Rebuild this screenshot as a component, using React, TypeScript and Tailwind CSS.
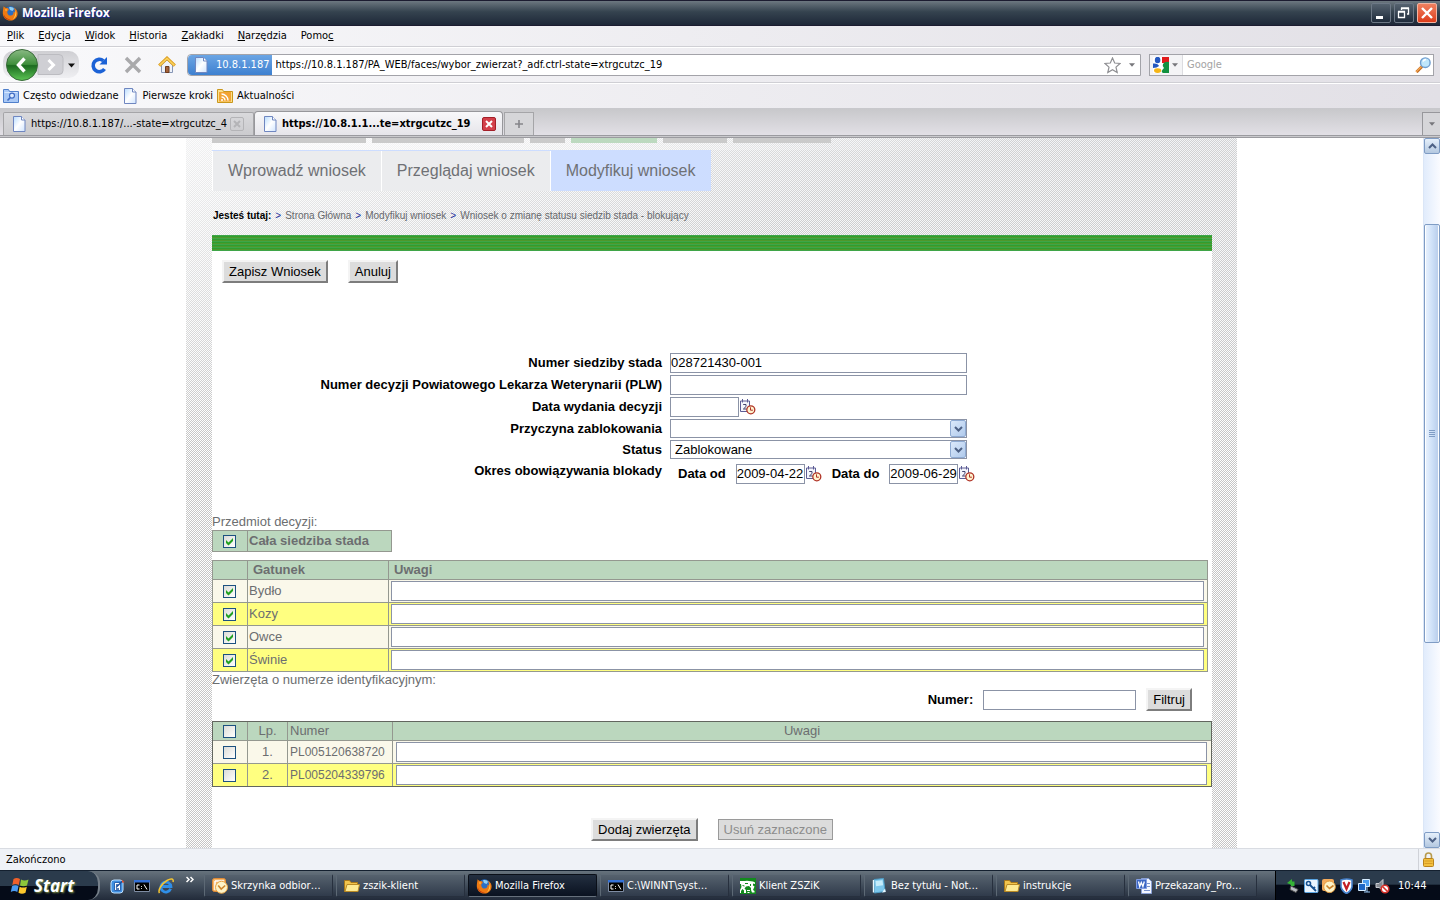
import { useState } from "react";
import type { ReactNode } from "react";
import clsx from "clsx";

/* ---------- Icons ---------- */

function FirefoxIcon() {
  return (
    <svg className="w-4 h-4 shrink-0" viewBox="0 0 16 16" aria-hidden="true">
      <circle cx="8.5" cy="7.5" r="6.2" fill="#2a6fc4" />
      <path d="M7 2.5C9 1.5 11.5 2.5 12 4L10.5 6 8 5z" fill="#8fd0f5" />
      <path
        d="M1.6 1.2C2.4 2.6 3.4 2.8 5 3 6.4 3.2 7 4 6.6 5L5.4 6.2C5 8 6 10.6 8.6 10.6 11 10.6 12 8.6 11.4 6.6L13 7.4C13 5 12.6 3.6 11.6 2.4 14.4 3.8 15.8 6.2 15.6 9 15.2 13 12 15.6 8.4 15.6 4 15.6.8 12.4.8 8 .8 5.4 1.4 3.2 1.6 1.2z"
        fill="#ee7a12"
      />
      <path d="M13.6 5.4C15 8.4 14 12.4 11 14 13 11.4 13.8 8.8 13.6 5.4z" fill="#ffd75a" />
      <path d="M1.8 9C2.6 12.4 5.4 14.4 8.8 14.4 6 15.6 1.6 13.6 1.8 9z" fill="#c2340c" />
      <path d="M3 4.2L5.2 4.4 4 6.4z" fill="#ffc04a" />
    </svg>
  );
}

function PageIcon() {
  return (
    <svg className="w-4 h-4 shrink-0" viewBox="0 0 16 16" aria-hidden="true">
      <defs>
        <linearGradient id="page" x1="0" y1="0" x2="1" y2="1">
          <stop offset="0" stopColor="#b8dcff" />
          <stop offset="0.5" stopColor="#fff" />
          <stop offset="1" stopColor="#cfe4ff" />
        </linearGradient>
      </defs>
      <path d="M1.5.5h8l3.500 3.500v11.500h-11.500z" fill="url(#page)" stroke="#6f86c0" />
      <path d="M9.500.5V4h3.500" fill="#fff" stroke="#6f86c0" />
    </svg>
  );
}

function FolderSearchIcon() {
  return (
    <svg className="w-4 h-4 shrink-0" viewBox="0 0 16 16" aria-hidden="true">
      <path d="M.5 1.500h5l1 2h9v11H.5z" fill="#a9c8f5" stroke="#4f7fcb" />
      <path d="M1.5 4.500h13" stroke="#d6e7ff" />
      <circle cx="9" cy="7.6" r="2.5" fill="#dcebff" stroke="#3f6cc4" strokeWidth="1.2" />
      <path d="M7.2 9.6L4.5 12.500" stroke="#3f6cc4" strokeWidth="1.6" />
    </svg>
  );
}

function FeedIcon() {
  return (
    <svg className="w-4 h-4 shrink-0" viewBox="0 0 16 16" aria-hidden="true">
      <path d="M.5 1.500h5l1 2h9v11H.5z" fill="#fbe08a" stroke="#c9971d" />
      <rect x="2" y="4" width="12" height="9.500" fill="#f3a433" />
      <path d="M4.500 6a6.500 6.500 0 0 1 6.500 6.500M4.500 9A3.500 3.500 0 0 1 8 12.500" fill="none" stroke="#fff" strokeWidth="1.4" />
      <circle cx="5" cy="12" r="1" fill="#fff" />
    </svg>
  );
}

function CalendarIcon() {
  return (
    <svg className="w-4 h-4 shrink-0" viewBox="0 0 16 16" aria-hidden="true">
      <path d="M.5 2h9v10.500h-9z" fill="#f4f5fb" stroke="#5c5c95" />
      <path d="M2.5 0v3.500M7.500 0v3.500" stroke="#5c5c95" />
      <path d="M3.200 5.500h2.800v2l-2.600 2.500h3.200" fill="none" stroke="#42426e" />
      <circle cx="10.800" cy="10.800" r="4" fill="#fff3cf" stroke="#b03326" strokeWidth="1.3" />
      <path d="M10.500 8.300v2.900h2.400" fill="none" stroke="#b03326" />
    </svg>
  );
}

function Caret({ className }: { className?: string }) {
  return (
    <svg className={clsx("w-1.5 h-1 shrink-0", className)} viewBox="0 0 7 4" aria-hidden="true">
      <path d="M0 0h7L3.5 4z" fill="currentColor" />
    </svg>
  );
}

function Chevron({ up }: { up?: boolean }) {
  return (
    <svg className="w-[9px] h-[6px]" viewBox="0 0 9 6" aria-hidden="true">
      <path d={up ? "M1 5l3.5-3.5L8 5" : "M1 1l3.5 3.5L8 1"} fill="none" stroke="#4d6185" strokeWidth="2" />
    </svg>
  );
}

function BackForward() {
  return (
    <svg className="w-[78px] h-[34px]" viewBox="0 0 78 34" aria-hidden="true">
      <defs>
        <linearGradient id="back" x1="0" y1="0" x2="0" y2="1">
          <stop offset="0" stopColor="#8aba84" />
          <stop offset="0.48" stopColor="#3f8f3c" />
          <stop offset="0.52" stopColor="#1c6b20" />
          <stop offset="1" stopColor="#5cc554" />
        </linearGradient>
        <linearGradient id="pill" x1="0" y1="0" x2="0" y2="1">
          <stop offset="0" stopColor="#cfcfd3" />
          <stop offset="1" stopColor="#efeff2" />
        </linearGradient>
      </defs>
      <rect x="1" y="3" width="76" height="27" rx="10" fill="url(#pill)" />
      <path d="M36 6.500h21q4 0 4 4v12q0 4-4 4H36z" fill="#cfcfd4" stroke="#bcbcc1" />
      <circle cx="20" cy="17" r="15.500" fill="url(#back)" stroke="#3b6b3b" />
      <path d="M22.500 10.500l-6 6.500 6 6.500" fill="none" stroke="#fff" strokeWidth="3.400" />
      <path d="M46.500 12l5 5-5 5" fill="none" stroke="#fff" strokeWidth="3" />
      <path d="M66 15.500h7l-3.500 4z" fill="#111" />
    </svg>
  );
}

function ReloadIcon() {
  return (
    <svg className="w-[18px] h-[18px]" viewBox="0 0 18 18" aria-hidden="true">
      <path d="M14.500 13A6.200 6.200 0 1 1 13.400 4.800" fill="none" stroke="#1c62d6" strokeWidth="3.600" />
      <path d="M17 1v7.500H9.500z" fill="#1c62d6" />
    </svg>
  );
}

function StopIcon() {
  return (
    <svg className="w-[18px] h-[18px]" viewBox="0 0 18 18" aria-hidden="true">
      <path d="M2 2l14 14M16 2L2 16" stroke="#a9a9ab" strokeWidth="3.400" />
    </svg>
  );
}

function HomeIcon() {
  return (
    <svg className="w-[18px] h-[18px]" viewBox="0 0 18 18" aria-hidden="true">
      <path d="M3.500 9v7.500h11V9L9 4z" fill="#eef2fa" stroke="#8796b5" />
      <path d="M7.500 10.500h3.500v6H7.500z" fill="#a5623a" stroke="#6d3c1e" />
      <path d="M1.200 9.600L9 2.200l7.800 7.400" fill="none" stroke="#d99a1c" strokeWidth="3.200" />
      <path d="M1.600 9.300L9 2.400l7.400 6.900" fill="none" stroke="#fbd05a" strokeWidth="1.600" />
    </svg>
  );
}

function StarIcon() {
  return (
    <svg className="w-[17px] h-[17px]" viewBox="0 0 17 17" aria-hidden="true">
      <path
        d="M8.500 1l2.200 5 5.300.5-4 3.600 1.200 5.400-4.700-2.800-4.700 2.800L5 10.100 1 6.500 6.300 6z"
        fill="#fff"
        stroke="#8f8f93"
        strokeWidth="1.200"
      />
    </svg>
  );
}

function GoogleIcon() {
  return (
    <svg className="w-4 h-4" viewBox="0 0 16 16" aria-hidden="true">
      <path d="M0 0h16v16H0z" fill="#fff" />
      <path d="M9 0h7v6H9z" fill="#e11b1b" />
      <path d="M10 7q2-3 6-2v11h-6q-3-1 1-5-2-2-1-4z" fill="#12913f" />
      <ellipse cx="4.600" cy="3" rx="2.800" ry="3.200" fill="#2458c0" />
      <path d="M0 6.500Q5 6 6 9 4 11 0 11z" fill="#2458c0" />
      <ellipse cx="4.600" cy="13.600" rx="3.600" ry="2.400" fill="#f5b516" />
    </svg>
  );
}

function MagnifierIcon() {
  return (
    <svg className="w-4 h-4" viewBox="0 0 16 16" aria-hidden="true">
      <path d="M7 9.500L1.500 15" stroke="#c2691c" strokeWidth="3" />
      <path d="M6.500 9.500L1 15" stroke="#f3a757" strokeWidth="1.200" />
      <circle cx="10.300" cy="5.700" r="4.800" fill="#bfe6fb" stroke="#6f9ed0" strokeWidth="1.400" />
      <path d="M8 4.500q1-2 3-2" fill="none" stroke="#fff" strokeWidth="1.400" />
    </svg>
  );
}

function OutlookIcon() {
  return (
    <svg className="w-4 h-4 shrink-0" viewBox="0 0 16 16" aria-hidden="true">
      <rect x="0.500" y="0.500" width="13" height="13" rx="2" fill="#f7b76a" stroke="#e08a35" />
      <path d="M3 3h9M3 3v9" stroke="#fff" strokeWidth="1.500" />
      <circle cx="9.500" cy="9.300" r="6" fill="#fdf3c8" stroke="#e8a545" />
      <path d="M6.200 7.500l3 3.500 4-3.500" fill="none" stroke="#d0862c" strokeWidth="1.600" />
    </svg>
  );
}

function FolderIcon() {
  return (
    <svg className="w-4 h-4 shrink-0" viewBox="0 0 16 16" aria-hidden="true">
      <path d="M.5 2.500h5l1.500 2h6.500v9H.5z" fill="#f1c44c" stroke="#a9791a" />
      <path d="M3 6.500h12.500L14 13.500H1z" fill="#fdea93" stroke="#b98a25" />
    </svg>
  );
}

function ConsoleIcon() {
  return (
    <svg className="w-4 h-4 shrink-0" viewBox="0 0 16 16" aria-hidden="true">
      <path d="M.5 2.500h15v11H.5z" fill="#000" stroke="#7e8ca3" />
      <path d="M0 2h16v2.500H0z" fill="#3471d6" />
      <path d="M5.500 7H3v4h2.500M7.500 8v.8M7.500 10.200v.8M10 6.500l3 5" fill="none" stroke="#fff" />
    </svg>
  );
}

function CowIcon() {
  return (
    <svg className="w-4 h-4 shrink-0" viewBox="0 0 16 16" aria-hidden="true">
      <path d="M0 0h16v16H0z" fill="#138a1e" />
      <path
        d="M0 3h5q2-.5 4 0l4 .5 2 1v1.500l-2-.5v2l1.500 1L13 12l1.500 1v1.500H12L11 12v-2l-2-2-3 .5-1.500 2L6 12v3H4v-2.500L2.500 11 1 13v2H0v-3l1.500-3L1 6H0z"
        fill="#fff"
      />
      <path d="M5 5.500h3M2.500 7.500l2 .5M10.500 6v2M8 10.500h2" stroke="#138a1e" />
      <path d="M7 12.500h3M7.500 14.500h2" stroke="#fff" />
    </svg>
  );
}

function NotepadIcon() {
  return (
    <svg className="w-4 h-4 shrink-0" viewBox="0 0 16 16" aria-hidden="true">
      <path d="M2 1.500l9.500-1 1.500 13-10.500 1.500z" fill="#7cc7ec" stroke="#4e9cc4" />
      <path d="M3.500 3l7-.8.6 5-7 1z" fill="#c4ecfb" />
      <path d="M1.500 2v12.500" stroke="#e8f8ff" fill="none" strokeWidth="1.400" />
      <path d="M10 14.500l3-4 .8 3.500z" fill="#e8f8ff" />
    </svg>
  );
}

function WordIcon() {
  return (
    <svg className="w-4 h-4 shrink-0" viewBox="0 0 16 16" aria-hidden="true">
      <path d="M5.500.5h7l3 3v12h-10z" fill="#f2f6ff" stroke="#8aa1d6" />
      <path d="M8 12.500h6M11 5.500h3M11 8.500h3" stroke="#7b93cc" />
      <path d="M.5 1.500h10v9H.5z" fill="#3b66c4" stroke="#7f9be0" />
      <path d="M2.500 3.500l1.200 5 1.600-4 1.600 4 1.400-5" fill="none" stroke="#fff" strokeWidth="1.300" />
    </svg>
  );
}

function DesktopIcon() {
  return (
    <svg className="w-4 h-4" viewBox="0 0 16 16" aria-hidden="true">
      <rect x="1" y="2" width="12" height="13" rx="3" fill="#3f8fe0" stroke="#bfe0ff" />
      <path d="M4.500 4.500h6v8h-6z" fill="#fff" stroke="#2b63b0" />
      <path d="M6 9.500l6.500-6.500M6 7h3M6 11h3" stroke="#1c4f9c" strokeWidth="1.300" />
      <path d="M11.500 1.500l3 2.500-2 1z" fill="#e2502b" />
    </svg>
  );
}

function ExplorerIcon() {
  return (
    <svg className="w-4 h-4" viewBox="0 0 16 16" aria-hidden="true">
      <path d="M12.600 10.800A5 5 0 1 1 12.900 8.500H4.500" fill="none" stroke="#2f8fe8" strokeWidth="2.800" />
      <path d="M1.500 15C-.5 12 4 5.500 9 2.500 13 .2 16 .5 15 4" fill="none" stroke="#f4c531" strokeWidth="1.500" />
    </svg>
  );
}

function WindowsFlag() {
  return (
    <svg className="w-5 h-[18px]" viewBox="0 0 20 18" aria-hidden="true">
      <path d="M3.500 2Q6.500 0 10 2L8.800 8Q5.500 6.200 2.300 8z" fill="#f0602a" />
      <path d="M11 2.500q3.500 1.800 7.500 0L17 8.500q-3.500 1.600-7 0z" fill="#8cc63a" />
      <path d="M2 9.200q3.200-1.800 6.500 0L7.300 15Q4.200 13.200.8 15z" fill="#4a9af0" />
      <path d="M9.600 9.700q3.500 1.700 7.200 0L15.500 15.800q-3.500 1.700-7 0z" fill="#fbc72c" />
    </svg>
  );
}

function LockIcon() {
  return (
    <svg className="w-[11px] h-[15px]" viewBox="0 0 11 15" aria-hidden="true">
      <path d="M2.500 7V4a3 3 0 0 1 6 0v3" fill="none" stroke="#b79a4c" strokeWidth="1.600" />
      <rect x="0.500" y="6.500" width="10" height="8" rx="1" fill="#f2bf3d" stroke="#b8821c" />
      <path d="M1.500 9h8M1.500 11.500h8" stroke="#d79c27" />
    </svg>
  );
}

function TrayIcons() {
  return (
    <svg className="w-[104px] h-4" viewBox="0 0 104 16" aria-hidden="true">
      {/* safely remove */}
      <path d="M5 8l7 3.500-2 3-6-3z" fill="#b9bdc4" stroke="#555" />
      <path d="M1 5l5-4v2.500h2.500V8H5l-.5-1.500z" fill="#35b336" />
      {/* key */}
      <rect x="18.500" y="1.500" width="13.500" height="13" rx="1" fill="#eaf5ff" stroke="#5aa5e2" />
      <circle cx="22.500" cy="5.500" r="2" fill="none" stroke="#17508f" strokeWidth="1.600" />
      <path d="M24 7l6 6M27 11l2-2" stroke="#17508f" strokeWidth="1.800" />
      {/* mail */}
      <rect x="36" y="1" width="12" height="12" rx="2" fill="#f5ab5c" />
      <circle cx="43.500" cy="8.800" r="5.800" fill="#fdf3c8" stroke="#e39b3e" />
      <path d="M40.500 7.500l3 3 4-3" fill="none" stroke="#c9802a" strokeWidth="1.600" />
      {/* shield */}
      <path d="M55 2q6-2 11 0v7q-1 4-5.500 6.500Q56 13 55 9z" fill="#fff" stroke="#4682cc" strokeWidth="1.600" />
      <path d="M57.500 4l3 7 3-7" fill="none" stroke="#c32026" strokeWidth="2.200" />
      {/* network */}
      <path d="M76.500 1.500h7v7h-7z" fill="#4a9df0" stroke="#d6ecff" />
      <path d="M72.500 5.500h7v7h-7z" fill="#1c66c4" stroke="#d6ecff" />
      <path d="M78 14h6M81 9v5" stroke="#9fcdf8" />
      {/* muted sound */}
      <path d="M90 5.500h3l4-4v11l-4-3h-3z" fill="#878b92" stroke="#c9ccd2" />
      <circle cx="99" cy="11" r="3.800" fill="#fff" stroke="#d8322a" strokeWidth="1.600" />
      <path d="M96.500 8.500l5 5" stroke="#d8322a" strokeWidth="1.600" />
    </svg>
  );
}

/* ---------- Form controls ---------- */

interface CheckboxProps {
  label: string;
  defaultChecked?: boolean;
}

function Checkbox({ label, defaultChecked }: CheckboxProps) {
  return (
    <span className="relative block w-[13px] h-[13px] mx-auto">
      <input
        type="checkbox"
        aria-label={label}
        defaultChecked={defaultChecked}
        className="peer appearance-none block w-[13px] h-[13px] border border-[#1c5180] bg-linear-to-br from-[#dcdcd7] to-white"
      />
      <svg
        className="absolute inset-0 w-[13px] h-[13px] hidden peer-checked:block pointer-events-none"
        viewBox="0 0 13 13"
        aria-hidden="true"
      >
        <path d="M3 5v3l2.500 2.500L10 6V3L5.500 7.500z" fill="#21a121" />
      </svg>
    </span>
  );
}

interface TextBoxProps {
  id?: string;
  label?: string;
  value?: string;
  className?: string;
}

function TextBox({ id, label, value = "", className }: TextBoxProps) {
  return (
    <input
      id={id}
      type="text"
      aria-label={label}
      defaultValue={value}
      className={clsx("block h-5 min-w-0 border border-[#8b93a6] bg-white text-[13px] font-normal text-black", className)}
    />
  );
}

interface DropDownProps {
  id: string;
  options: string[];
}

function DropDown({ id, options }: DropDownProps) {
  return (
    <span className="relative block w-[297px] h-[19px]">
      <select
        id={id}
        className="appearance-none block w-full h-[19px] border border-[#8b93a6] bg-white pl-1 text-[13px] leading-4 font-normal text-black"
      >
        {options.map((option) => (
          <option key={option}>{option}</option>
        ))}
      </select>
      <span className="absolute right-px top-px w-4 h-[17px] flex items-center justify-center rounded-xs border border-[#8fabd3] bg-linear-to-br from-[#dbe9fb] to-[#b0caec] pointer-events-none">
        <Chevron />
      </span>
    </span>
  );
}

function DateButton({ label }: { label: string }) {
  return (
    <button type="button" aria-label={label} className="ml-px">
      <CalendarIcon />
    </button>
  );
}

interface PushButtonProps {
  children: ReactNode;
  disabled?: boolean;
}

function PushButton({ children, disabled }: PushButtonProps) {
  return (
    <button
      type="button"
      disabled={disabled}
      className={clsx(
        "shrink-0 px-[5px] text-[13px] leading-[19px] bg-[#dcdcdc]",
        disabled
          ? "border border-[#9a9a9a] text-[#8c8c8c]"
          : "border-2 border-t-[#f4f4f4] border-l-[#f4f4f4] border-r-[#7d7d7d] border-b-[#7d7d7d] text-black"
      )}
    >
      {children}
    </button>
  );
}

/* ---------- Browser window ---------- */

const MENU = [
  ["", "P", "lik"],
  ["", "E", "dycja"],
  ["", "W", "idok"],
  ["", "H", "istoria"],
  ["", "Z", "akładki"],
  ["", "N", "arzędzia"],
  ["Pomo", "c", ""],
];

function TitleBar() {
  return (
    <header className="h-[26px] flex items-center justify-between pl-0.5 pr-[3px] border-y border-[#1c1c30] bg-linear-to-b from-[#6d7880] via-[#35434f] via-45% to-[#1e2838]">
      <div className="flex items-center gap-1">
        <FirefoxIcon />
        <h1 className="font-['Open_Sans',sans-serif] text-[12px] leading-4 font-bold text-white [text-shadow:1px_1px_0_#1b2a9a]">
          Mozilla Firefox
        </h1>
      </div>
      <div className="flex gap-[3px]">
        <button type="button" aria-label="Minimalizuj" className="w-5 h-5 rounded-xs border border-[#6d7886] bg-linear-to-b from-[#566370] to-[#1f2b3b]">
          <svg viewBox="0 0 18 18" className="w-full h-full" aria-hidden="true">
            <path d="M4 12h7v3H4z" fill="#fff" />
          </svg>
        </button>
        <button type="button" aria-label="Przywróć" className="w-5 h-5 rounded-xs border border-[#6d7886] bg-linear-to-b from-[#566370] to-[#1f2b3b]">
          <svg viewBox="0 0 18 18" className="w-full h-full" aria-hidden="true">
            <path d="M3.500 8h6v5.500h-6zM3 7.500h7M6.500 6V4.500h7V10H12M6 4h8" fill="none" stroke="#fff" strokeWidth="1.300" />
          </svg>
        </button>
        <button type="button" aria-label="Zamknij" className="w-5 h-5 rounded-xs border border-[#f2b3a2] bg-linear-to-b from-[#f0805f] to-[#dd3a17]">
          <svg viewBox="0 0 18 18" className="w-full h-full" aria-hidden="true">
            <path d="M4 4l10 10M14 4L4 14" stroke="#fff" strokeWidth="2.400" />
          </svg>
        </button>
      </div>
    </header>
  );
}

function MenuBar() {
  return (
    <nav aria-label="Menu" className="h-[21px] flex items-center gap-3.5 pl-[7px] border-b border-[#cfcfd4]">
      {MENU.map(([before, key, after]) => (
        <button key={before + key + after} type="button">
          {before}
          <span className="underline">{key}</span>
          {after}
        </button>
      ))}
    </nav>
  );
}

function NavigationBar() {
  return (
    <div className="h-9 flex items-center pl-0.5 pr-1.5 border-t border-t-white border-b border-b-[#cfcfd4]">
      <button type="button" aria-label="Wstecz i do przodu">
        <BackForward />
      </button>
      <button type="button" aria-label="Odśwież" className="ml-2.5">
        <ReloadIcon />
      </button>
      <button type="button" aria-label="Zatrzymaj" className="ml-4">
        <StopIcon />
      </button>
      <button type="button" aria-label="Strona startowa" className="ml-4">
        <HomeIcon />
      </button>
      <div className="flex-1 min-w-0 h-[22px] ml-[11px] flex items-center border border-[#a3a3a9] rounded-l-sm bg-white">
        <span className="h-full flex items-center gap-1.5 pl-1.5 pr-0.5 rounded-l-sm text-white bg-linear-to-b from-[#6ba5e4] to-[#3d80d0]">
          <PageIcon />
          10.8.1.187
        </span>
        <input
          type="text"
          aria-label="Adres"
          defaultValue="https://10.8.1.187/PA_WEB/faces/wybor_zwierzat?_adf.ctrl-state=xtrgcutzc_19"
          className="flex-1 min-w-0 pl-1 bg-transparent"
        />
        <button type="button" aria-label="Dodaj zakładkę">
          <StarIcon />
        </button>
        <button type="button" aria-label="Historia adresów" className="ml-2 mr-[5px]">
          <Caret className="text-[#77777b]" />
        </button>
      </div>
      <div className="w-[285px] h-[22px] ml-2 flex items-center border border-[#a3a3a9] bg-white">
        <button type="button" aria-label="Wyszukiwarka" className="h-full flex items-center gap-[3px] pl-[3px] pr-1 border-r border-[#dcdce0] bg-[#f4f4f6]">
          <GoogleIcon />
          <Caret className="text-[#77777b]" />
        </button>
        <input type="text" aria-label="Szukaj" placeholder="Google" className="flex-1 min-w-0 pl-1 placeholder:text-[#a3a3a3]" />
        <button type="button" aria-label="Szukaj w Google" className="mr-0.5">
          <MagnifierIcon />
        </button>
      </div>
    </div>
  );
}

function BookmarksBar() {
  return (
    <nav aria-label="Zakładki" className="h-[26px] flex items-center gap-1 pl-[3px] border-t border-t-white border-b border-b-[#c8c8cc]">
      <a href="#czesto" className="flex items-center gap-1">
        <FolderSearchIcon />
        Często odwiedzane
      </a>
      <a href="#kroki" className="flex items-center gap-1">
        <PageIcon />
        Pierwsze kroki
      </a>
      <a href="#aktualnosci" className="flex items-center gap-1">
        <FeedIcon />
        Aktualności
      </a>
    </nav>
  );
}

function TabStrip() {
  return (
    <div className="h-[29px] flex items-end justify-between border-b-[3px] border-double border-[#9b9ba0] bg-linear-to-b from-[#c8c8cb] to-[#e2e0e6]">
      <div className="flex items-end">
        <div className="w-[251px] h-[23px] ml-[3px] flex items-center gap-[3px] pl-2 border border-b-0 border-[#a5a5a8] rounded-t-xs bg-linear-to-b from-[#d9d9dc] to-[#cbcbce]">
          <PageIcon />
          <button type="button" className="whitespace-nowrap">https://10.8.1.187/...-state=xtrgcutzc_4</button>
          <button type="button" aria-label="Zamknij kartę" className="w-3.5 h-3.5 shrink-0 border border-[#b4b4b7] rounded-xs">
            <svg viewBox="0 0 12 12" aria-hidden="true">
              <path d="M3 3l6 6M9 3L3 9" stroke="#b4b4b7" strokeWidth="2" />
            </svg>
          </button>
        </div>
        <div className="w-[249px] h-6 flex items-center gap-[3px] pl-2 border border-b-0 border-[#97979b] rounded-t-sm bg-linear-to-b from-[#f8f8fa] to-[#e6e5ea]">
          <PageIcon />
          <button type="button" className="w-[197px] text-left font-bold whitespace-nowrap">https://10.8.1.1...te=xtrgcutzc_19</button>
          <button type="button" aria-label="Zamknij kartę" className="w-3.5 h-3.5 shrink-0 border border-[#a31f28] rounded-xs bg-[#d3404a]">
            <svg viewBox="0 0 12 12" aria-hidden="true">
              <path d="M3 3l6 6M9 3L3 9" stroke="#fff" strokeWidth="2" />
            </svg>
          </button>
        </div>
        <button type="button" aria-label="Nowa karta" className="w-[30px] h-[23px] ml-px flex items-center justify-center border border-b-0 border-[#a5a5a8] bg-[#d6d6d9]">
          <svg className="w-2 h-2" viewBox="0 0 8 8" aria-hidden="true">
            <path d="M4 0v8M0 4h8" stroke="#86868a" strokeWidth="1.600" />
          </svg>
        </button>
      </div>
      <button type="button" aria-label="Lista kart" className="w-[18px] h-[23px] flex items-center justify-center border border-b-0 border-r-0 border-[#97979b] bg-[#d6d6d9]">
        <Caret className="text-[#77777b]" />
      </button>
    </div>
  );
}

function ScrollBar() {
  return (
    <div className="w-[17px] shrink-0 flex flex-col border-l border-[#dbe6f7] bg-linear-to-r from-[#e1ecfc] to-[#fafbff]" aria-hidden="true">
      <div className="h-4 flex items-center justify-center rounded-xs border border-[#7f9cc4] bg-linear-to-b from-[#e6f0fb] to-[#b4c8e0]">
        <Chevron up />
      </div>
      <div className="grow-[70] basis-0" />
      <div className="grow-[418] basis-0 flex flex-col items-center justify-center gap-px rounded-xs border border-[#7f9cc4] bg-linear-to-r from-[#eaf3ff] via-[#cfe1f8] to-[#b6cbea] shadow-[inset_1px_0_#fff,inset_-1px_0_#fff]">
        <span className="w-1.5 h-px bg-[#7f9cc4]" />
        <span className="w-1.5 h-px bg-[#7f9cc4]" />
        <span className="w-1.5 h-px bg-[#7f9cc4]" />
        <span className="w-1.5 h-px bg-[#7f9cc4]" />
      </div>
      <div className="grow-[190] basis-0" />
      <div className="h-4 flex items-center justify-center rounded-xs border border-[#7f9cc4] bg-linear-to-b from-[#e6f0fb] to-[#b4c8e0]">
        <Chevron />
      </div>
    </div>
  );
}

/* ---------- Application page ---------- */

const SUBTABS = ["Wprowadź wniosek", "Przeglądaj wniosek", "Modyfikuj wniosek"];
const CRUMBS = ["Strona Główna", "Modyfikuj wniosek", "Wniosek o zmianę statusu siedzib stada - blokujący"];
const SPECIES = ["Bydło", "Kozy", "Owce", "Świnie"];
const ANIMALS = ["PL005120638720", "PL005204339796"];

function PageHeader() {
  const [active, setActive] = useState(2);

  return (
    <div>
      {/* Bottom edge of the main menu */}
      <div className="h-3 pb-[7px] flex gap-1.5 bg-linear-to-r from-white/60 to-transparent to-80%">
        <span className="w-[154px] bg-[#cacaca]" />
        <span className="w-[152px] bg-[#cacaca]" />
        <span className="w-[35px] bg-[#cacaca]" />
        <span className="w-[86px] bg-[#bcd9bf]" />
        <span className="w-16 bg-[#cacaca]" />
        <span className="w-[98px] bg-[#cacaca]" />
      </div>
      <nav aria-label="Wniosek" className="w-fit flex gap-px border-t border-[#cdddff] bg-white pl-px">
        {SUBTABS.map((tab, i) => (
          <button
            key={tab}
            type="button"
            onClick={() => setActive(i)}
            className={clsx(
              "h-10 px-[15px] text-[16px] leading-6 text-[#6f7175]",
              i === active ? "bg-[#cdddff]" : "bg-[#ebecee]"
            )}
          >
            {tab}
          </button>
        ))}
      </nav>
      <nav aria-label="Okruszki" className="h-11 flex items-center gap-1 pt-1.5 pl-px text-[10px] text-[#66686c]">
        <strong className="text-black">Jesteś tutaj:</strong>
        {CRUMBS.map((crumb) => (
          <span key={crumb} className="flex gap-1">
            <span className="text-[#1d2f9c]">&gt;</span>
            <a href="#okruszek">{crumb}</a>
          </span>
        ))}
      </nav>
      <div className="h-4 bg-[repeating-linear-gradient(to_bottom,#3fa548_0,#3fa548_1px,#2f9e2f_1px,#2f9e2f_2px,#4f982c_2px,#4f982c_3px)]" />
    </div>
  );
}

function DecisionForm() {
  return (
    <div className="grid grid-cols-[450px_1fr] gap-x-2 gap-y-0.5 font-bold text-[13px] leading-5 text-black">
      <label htmlFor="herd" className="text-right">Numer siedziby stada</label>
      <TextBox id="herd" value="028721430-001" className="w-[297px]" />

      <label htmlFor="decision" className="text-right">Numer decyzji Powiatowego Lekarza Weterynarii (PLW)</label>
      <TextBox id="decision" className="w-[297px]" />

      <label htmlFor="issued" className="text-right">Data wydania decyzji</label>
      <div className="flex items-center">
        <TextBox id="issued" className="w-[69px]" />
        <DateButton label="Wybierz datę wydania" />
      </div>

      <label htmlFor="reason" className="text-right leading-[19px]">Przyczyna zablokowania</label>
      <DropDown id="reason" options={["", "Inna"]} />

      <label htmlFor="status" className="text-right leading-[19px]">Status</label>
      <DropDown id="status" options={["Zablokowane", "Odblokowane"]} />

      <span className="text-right">Okres obowiązywania blokady</span>
      <div className="flex items-center pt-[3px] pl-2">
        <label htmlFor="from" className="mr-2.5">Data od</label>
        <TextBox id="from" value="2009-04-22" className="w-[69px]" />
        <DateButton label="Wybierz datę od" />
        <label htmlFor="to" className="mx-2.5">Data do</label>
        <TextBox id="to" value="2009-06-29" className="w-[69px]" />
        <DateButton label="Wybierz datę do" />
      </div>
    </div>
  );
}

function SpeciesTable() {
  return (
    <table className="w-[996px] max-w-full table-fixed border-collapse text-left [&_td]:border [&_th]:border [&_td]:border-[#949890] [&_th]:border-[#949890]">
      <colgroup>
        <col className="w-[35px]" />
        <col className="w-[141px]" />
        <col />
      </colgroup>
      <thead>
        <tr className="h-[19px] bg-[#bbd7be] leading-[18px]">
          <th aria-label="Zaznaczenie" />
          <th className="pl-[5px]">Gatunek</th>
          <th className="pl-[5px]">Uwagi</th>
        </tr>
      </thead>
      <tbody>
        {SPECIES.map((name, i) => (
          <tr key={name} className={clsx("h-[23px]", i % 2 ? "bg-[#ffff80]" : "bg-[#faf8ea]")}>
            <td className="pr-0.5">
              <Checkbox label={name} defaultChecked />
            </td>
            <td className="pl-px">{name}</td>
            <td className="pl-0.5 pr-[3px]">
              <TextBox label={`Uwagi: ${name}`} className="w-full" />
            </td>
          </tr>
        ))}
      </tbody>
    </table>
  );
}

function AnimalsTable() {
  return (
    <table className="w-full table-fixed border-collapse border border-[#62665f] [&_td]:border [&_th]:border [&_td]:border-[#949890] [&_th]:border-[#949890] outline outline-[#62665f] -outline-offset-1">
      <colgroup>
        <col className="w-[35px]" />
        <col className="w-10" />
        <col className="w-[105px]" />
        <col />
      </colgroup>
      <thead>
        <tr className="h-[19px] bg-[#bbd7be] leading-[18px]">
          <th className="pr-0.5">
            <Checkbox label="Zaznacz wszystkie" />
          </th>
          <th className="font-normal">Lp.</th>
          <th className="pl-0.5 text-left font-normal">Numer</th>
          <th className="font-normal">Uwagi</th>
        </tr>
      </thead>
      <tbody>
        {ANIMALS.map((number, i) => (
          <tr key={number} className={clsx("h-[23px]", i % 2 ? "bg-[#ffff80]" : "bg-[#faf8ea]")}>
            <td className="pr-0.5">
              <Checkbox label={number} />
            </td>
            <td className="text-center">{i + 1}.</td>
            <td className="pl-0.5 text-[12px] whitespace-nowrap">{number}</td>
            <td className="pl-[3px] pr-1">
              <TextBox label={`Uwagi: ${number}`} className="w-full" />
            </td>
          </tr>
        ))}
      </tbody>
    </table>
  );
}

function ApplicationPage() {
  return (
    <main className="flex-1 min-w-0 flex justify-center bg-white font-['Liberation_Sans',Arial,sans-serif] text-[13px] leading-4 text-[#6c6e70]">
      <div className="w-full max-w-[1051px] flex flex-col pl-[26px] pr-[25px] bg-[linear-gradient(160deg,rgba(255,255,255,0.7),transparent_28%),linear-gradient(to_bottom,rgba(226,228,232,0.4),transparent_300px),repeating-conic-gradient(#c6c6c6_0_25%,#fff_0_50%)] bg-size-[100%_100%,100%_100%,2px_2px]">
        <PageHeader />
        <div className="flex-1 flex flex-col bg-white">
          <div className="flex gap-5 pt-[9px] pl-2.5">
            <PushButton>Zapisz Wniosek</PushButton>
            <PushButton>Anuluj</PushButton>
          </div>
          <div className="mt-[70px]">
            <DecisionForm />
          </div>

          <h2 className="mt-[30px]">Przedmiot decyzji:</h2>
          <div className="w-[180px] h-[22px] flex items-center border border-[#949890] bg-[#bbd7be] font-bold">
            <span className="w-[35px] h-full flex items-center pr-0.5 border-r border-[#949890]">
              <Checkbox label="Cała siedziba stada" defaultChecked />
            </span>
            <span className="pl-px">Cała siedziba stada</span>
          </div>
          <div className="mt-2">
            <SpeciesTable />
          </div>

          <h2>Zwierzęta o numerze identyfikacyjnym:</h2>
          <div className="flex items-center justify-end gap-2.5 pr-5 mb-2.5">
            <label htmlFor="number" className="font-bold text-black">Numer:</label>
            <TextBox id="number" className="w-[153px]" />
            <PushButton>Filtruj</PushButton>
          </div>
          <AnimalsTable />

          <div className="flex justify-center items-center gap-5 mt-[31px] pb-1">
            <PushButton>Dodaj zwierzęta</PushButton>
            <PushButton disabled>Usuń zaznaczone</PushButton>
          </div>
        </div>
      </div>
    </main>
  );
}

/* ---------- Desktop taskbar ---------- */

const TASKS = [
  { title: "Skrzynka odbior…", icon: <OutlookIcon /> },
  { title: "zszik-klient", icon: <FolderIcon /> },
  { title: "Mozilla Firefox", icon: <FirefoxIcon />, active: true },
  { title: "C:\\WINNT\\syst…", icon: <ConsoleIcon /> },
  { title: "Klient ZSZiK", icon: <CowIcon /> },
  { title: "Bez tytułu - Not…", icon: <NotepadIcon /> },
  { title: "instrukcje", icon: <FolderIcon /> },
  { title: "Przekazany_Pro…", icon: <WordIcon /> },
];

function Taskbar() {
  return (
    <footer className="h-[30px] flex items-stretch border-t border-[#14202f] bg-linear-to-b from-[#66727c] via-[#414d5b] via-50% to-[#222b3a] text-white">
      <button
        type="button"
        className="w-[100px] shrink-0 flex items-center gap-1 pl-2.5 rounded-r-xl border-r-2 border-[#76808a] bg-linear-to-b from-[#2b3b4c] from-50% to-[#050b18] to-52%"
      >
        <WindowsFlag />
        <span className="font-['Open_Sans',sans-serif] text-[17px] leading-5 font-bold italic [text-shadow:1px_1px_2px_#8a9a4a]">Start</span>
      </button>
      <div className="w-[104px] shrink-0 flex items-center gap-2 pl-2.5">
        <button type="button" aria-label="Pulpit"><DesktopIcon /></button>
        <button type="button" aria-label="Wiersz polecenia"><ConsoleIcon /></button>
        <button type="button" aria-label="Internet Explorer"><ExplorerIcon /></button>
        <button type="button" aria-label="Więcej" className="self-start pl-1">
          <svg className="w-2 h-5" viewBox="0 0 8 20" aria-hidden="true">
            <path d="M.5 6L3 8.500.5 11M4.500 6L7 8.500 4.500 11" fill="none" stroke="#fff" strokeWidth="1.500" />
          </svg>
        </button>
      </div>
      <div className="flex-1 min-w-0 flex gap-[3px] py-[3px]">
        {TASKS.map((task) => (
          <button
            key={task.title}
            type="button"
            className={clsx(
              "w-[129px] min-w-0 flex items-center gap-[3px] pl-[7px] rounded-xs border whitespace-nowrap",
              task.active
                ? "border-[#0a0f18] border-b-[#66707c] bg-linear-to-b from-[#232f40] to-[#0a1220]"
                : "border-[#5d6975] border-b-[#27303e] border-r-[#27303e] bg-linear-to-b from-[#56626e] to-[#303b4b]"
            )}
          >
            {task.icon}
            {task.title}
          </button>
        ))}
      </div>
      <div className="w-[165px] shrink-0 flex items-center gap-2 pl-2.5 border-l border-black bg-linear-to-b from-[#2b3b4c] from-45% to-[#050b18] to-50%">
        <TrayIcons />
        <time className="whitespace-nowrap">10:44</time>
      </div>
    </footer>
  );
}

export default function App() {
  return (
    <div className="min-h-screen flex flex-col font-['DejaVu_Sans_Condensed','DejaVu_Sans',sans-serif] text-[11px] leading-4 text-black">
      <TitleBar />
      <div className="bg-linear-to-r from-[#f9f9fb] to-[#e2e0e6]">
        <MenuBar />
        <NavigationBar />
        <BookmarksBar />
        <TabStrip />
      </div>
      <div className="flex-1 flex">
        <ApplicationPage />
        <ScrollBar />
      </div>
      <div className="h-[22px] flex items-center justify-between border-t border-[#d9dce2] bg-[#eff2f7] pl-1.5 pr-1.5">
        <p>Zakończono</p>
        <span className="h-full flex items-center pl-1 border-l border-[#cfd2d8]">
          <LockIcon />
        </span>
      </div>
      <Taskbar />
    </div>
  );
}
